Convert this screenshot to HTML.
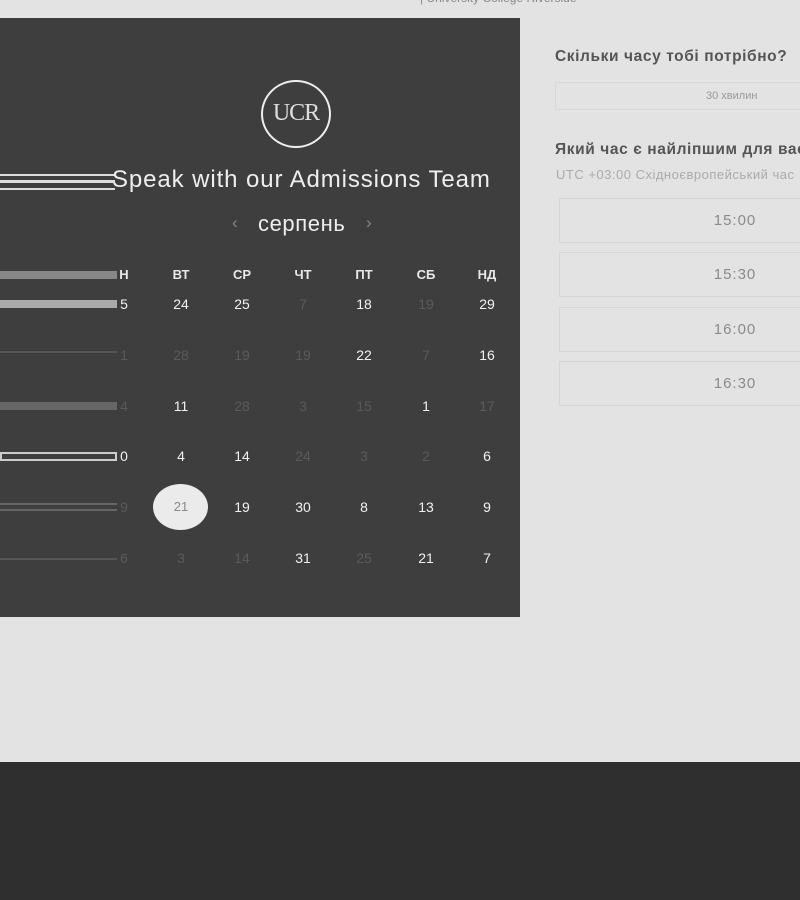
<!DOCTYPE html>
<html><head><meta charset="utf-8"><style>
body{margin:0;width:800px;height:900px;background:#e3e3e3;position:relative;overflow:hidden;font-family:"Liberation Sans","DejaVu Sans",sans-serif}
.a{position:absolute}
.panel{left:0;top:18px;width:520px;height:599px;background:#3e3e3e}
.d{position:absolute;width:40px;margin-left:-20px;text-align:center;font-size:14px;color:#f2f2f2}
.f{color:#5a5a5a}
.h{font-weight:bold;font-size:13px;color:#e8e8e8}
.slot{position:absolute;left:559px;width:260px;height:45px;border:1px solid #d6d6d6;box-sizing:border-box;text-align:center;line-height:44px;font-size:15px;color:#8a8a8a;letter-spacing:1px}
.slot span{position:absolute;left:175px;transform:translateX(-50%)}
</style></head><body>
<div class="a" style="left:420px;top:-9px;font-size:12px;color:#888">| University College Riverside</div>
<div class="a panel"></div>
<div class="a" style="left:261px;top:80px;width:70px;height:68px;border:2.5px solid #eee;border-radius:50%;box-sizing:border-box;text-align:center;line-height:62px;font-family:'Liberation Serif',serif;font-size:24px;color:#ddd;letter-spacing:-1px">UCR</div>
<div class="a" style="left:0;top:174px;width:115px;height:16px;border-top:2px solid #ddd;border-bottom:2px solid #ddd;box-sizing:border-box"></div>
<div class="a" style="left:0;top:180px;width:115px;height:3px;background:#ddd"></div>
<div class="a" style="left:112px;top:166px;font-size:24px;color:#eee;letter-spacing:0.9px;white-space:nowrap">Speak with our Admissions Team</div>
<div class="a" style="left:232px;top:213px;font-size:17px;color:#888">‹</div>
<div class="a" style="left:258px;top:211px;font-size:22px;color:#eee;letter-spacing:0.6px">серпень</div>
<div class="a" style="left:366px;top:213px;font-size:17px;color:#888">›</div>
<div class="a" style="left:0;top:271px;width:117px;height:8px;background:#888"></div>
<div class="a" style="left:0;top:300px;width:117px;height:8px;background:#aaa"></div>
<div class="a" style="left:0;top:351px;width:117px;height:2px;background:#555"></div>
<div class="a" style="left:0;top:402px;width:117px;height:8px;background:#666"></div>
<div class="a" style="left:0;top:452px;width:117px;height:9px;border:2px solid #ccc;box-sizing:border-box"></div>
<div class="a" style="left:0;top:503px;width:117px;height:8px;border-top:2px solid #666;border-bottom:2px solid #666;box-sizing:border-box"></div>
<div class="a" style="left:0;top:558px;width:117px;height:2px;background:#555"></div>
<div class="a" style="left:153px;top:484px;width:55px;height:46px;border-radius:50%;background:#ebebeb"></div>
<div id="cal"></div>
<div class="a" style="left:555px;top:48px;font-size:15.5px;font-weight:bold;color:#555;white-space:nowrap;letter-spacing:0.6px">Скільки часу тобі потрібно?</div>
<div class="a" style="left:555px;top:82px;width:260px;height:28px;border:1px solid #d8d8d8;box-sizing:border-box"></div>
<div class="a" style="left:706px;top:90px;font-size:11px;color:#999">30 хвилин</div>
<div class="a" style="left:555px;top:141px;font-size:15.5px;font-weight:bold;color:#555;white-space:nowrap;letter-spacing:0.6px">Який час є найліпшим для вас?</div>
<div class="a" style="left:556px;top:167px;font-size:13px;color:#aaa;white-space:nowrap;letter-spacing:0.5px">UTC +03:00 Східноєвропейський час</div>
<div class="slot" style="top:198px"><span>15:00</span></div>
<div class="slot" style="top:252px"><span>15:30</span></div>
<div class="slot" style="top:307px"><span>16:00</span></div>
<div class="slot" style="top:361px"><span>16:30</span></div>
<div class="a" style="left:0;top:762px;width:800px;height:138px;background:#2f2f2f"></div>
<script>
var xs=[124,181,242,303,364,426,487],ys=[304,355,406,456,507,558];
var hd=["Н","ВТ","СР","ЧТ","ПТ","СБ","НД"];
var rows=[["5","24","25","~7","18","~19","29"],["~1","~28","~19","~19","22","~7","16"],["~4","11","~28","~3","~15","1","~17"],["0","4","14","~24","~3","~2","6"],["~9","sel","19","30","8","13","9"],["~6","~3","~14","31","~25","21","7"]];
var h="";
hd.forEach(function(t,i){h+='<div class="d h" style="left:'+xs[i]+'px;top:267px">'+t+'</div>'});
rows.forEach(function(r,j){r.forEach(function(t,i){var c="d";if(t[0]=="~"){c+=" f";t=t.slice(1)}
if(t=="sel"){h+='<div class="d" style="left:'+xs[i]+'px;top:'+(ys[j]-8)+'px;color:#888;font-size:13px">21</div>';return}
h+='<div class="'+c+'" style="left:'+xs[i]+'px;top:'+(ys[j]-8)+'px">'+t+'</div>'})});
document.getElementById("cal").innerHTML=h;
</script>
</body></html>
